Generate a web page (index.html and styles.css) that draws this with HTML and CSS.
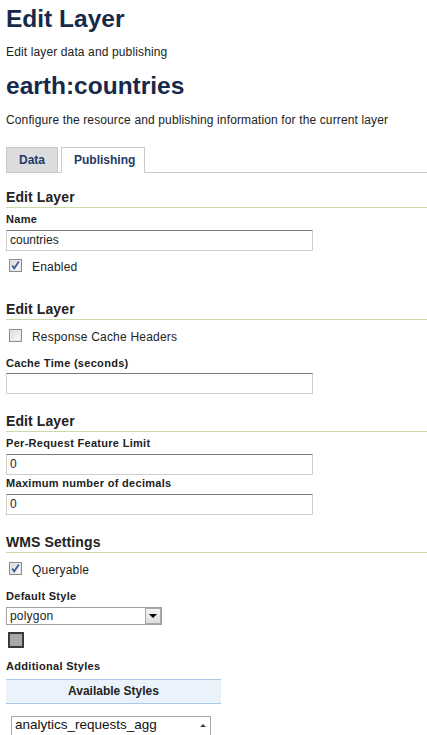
FILE: index.html
```html
<!DOCTYPE html>
<html>
<head>
<meta charset="utf-8">
<link rel="stylesheet" href="styles.css">
</head>
<body>
<h1 class="page-title">Edit Layer</h1>
<p class="page-sub first">Edit layer data and publishing</p>
<h2 class="page-title layer">earth:countries</h2>
<p class="page-sub second">Configure the resource and publishing information for the current layer</p>

<ul class="tabs">
  <li class="tab">Data</li>
  <li class="tab active">Publishing</li>
</ul>

<section class="panel first-panel">
  <h3 class="sec">Edit Layer</h3>
  <div class="lbl">Name</div>
  <div class="input">countries</div>
  <div class="check"><span class="cb on"><svg viewBox="0 0 11 11" width="11" height="11"><path d="M2.2 5.6 L4.2 8.4 L8.8 1.6" fill="none" stroke="#3c5a96" stroke-width="1.8"/></svg></span>Enabled</div>
</section>

<section class="panel">
  <h3 class="sec">Edit Layer</h3>
  <div class="check"><span class="cb"></span>Response Cache Headers</div>
  <div class="lbl after-check">Cache Time (seconds)</div>
  <div class="input tight">&nbsp;</div>
</section>

<section class="panel">
  <h3 class="sec">Edit Layer</h3>
  <div class="lbl">Per-Request Feature Limit</div>
  <div class="input">0</div>
  <div class="lbl after-input">Maximum number of decimals</div>
  <div class="input">0</div>
</section>

<section class="panel">
  <h3 class="sec">WMS Settings</h3>
  <div class="check"><span class="cb on"><svg viewBox="0 0 11 11" width="11" height="11"><path d="M2.2 5.6 L4.2 8.4 L8.8 1.6" fill="none" stroke="#3c5a96" stroke-width="1.8"/></svg></span>Queryable</div>
  <div class="lbl after-check">Default Style</div>
  <div class="select"><span class="select-val">polygon</span><span class="select-btn"><svg viewBox="0 0 8 4" width="8" height="4"><path d="M0 0 H8 L4 4 Z" fill="#000"/></svg></span></div>
  <div class="swatch"></div>
  <div class="lbl after-swatch">Additional Styles</div>
  <div class="avail">Available Styles</div>
  <div class="listbox"><span class="list-item">analytics_requests_agg</span><span class="scroll"><svg viewBox="0 0 6 3" width="6" height="3"><path d="M0 3 H6 L3 0 Z" fill="#444"/></svg></span></div>
</section>
</body>
</html>
```

FILE: styles.css
```css
* { box-sizing: border-box; }
html, body { margin: 0; padding: 0; }
body {
  padding: 5px 0 0 6px;
  font-family: "Liberation Sans", Arial, sans-serif;
  color: #222;
  background: #fff;
  overflow: hidden;
}
.page-title {
  margin: 0;
  font-size: 24.5px;
  line-height: 28px;
  font-weight: bold;
  color: #17294a;
}
.page-title.layer { margin-top: 13px; }
.page-sub {
  margin: 0;
  font-size: 12px;
  line-height: 14px;
  letter-spacing: 0.13px;
  color: #222;
}
.page-sub.first { margin-top: 12px; }
.page-sub.second { margin-top: 13px; }

.tabs {
  list-style: none;
  margin: 20px 0 0 0;
  padding: 0;
  display: flex;
  gap: 3px;
  border-bottom: 1px solid #c8c8c8;
}
.tab {
  margin-bottom: -1px;
  padding: 5px 12px 5px;
  border: 1px solid #c8c8c8;
  background: #dcdcdc;
  font-size: 12px;
  line-height: 14px;
  font-weight: bold;
  color: #1f3a68;
}
.tab.active {
  background: #fff;
  border-bottom-color: #fff;
  padding-right: 9px;
}

.panel {
  display: flow-root;
  margin-top: 19px;
}
.panel.first-panel { margin-top: 16px; }
.sec {
  margin: 0;
  font-size: 14px;
  line-height: 16px;
  font-weight: bold;
  letter-spacing: 0.1px;
  color: #222;
  padding-bottom: 2px;
  border-bottom: 1px solid #c9dba7;
}
.lbl {
  margin-top: 5px;
  font-size: 11px;
  line-height: 13px;
  font-weight: bold;
  letter-spacing: 0.3px;
  color: #222;
}
.lbl.after-input { margin-top: 2px; }
.lbl.after-check { margin-top: 12px; }
.lbl.after-swatch { margin-top: 12px; }
.input {
  margin-top: 4px;
  width: 307px;
  height: 21px;
  border: 1px solid #cfcfcf;
  border-top-color: #7a7a7a;
  padding: 0 3px;
  font-size: 12px;
  line-height: 19px;
  color: #222;
}
.input.tight { margin-top: 3px; }
.check {
  display: flex;
  align-items: flex-start;
  margin-top: 8px;
  margin-bottom: 7px;
  font-size: 12px;
  line-height: 16px;
  letter-spacing: 0.2px;
  color: #222;
}
.sec + .check { margin-top: 9px; }
.cb {
  flex: none;
  width: 13px;
  height: 13px;
  margin: 0 10px 0 3px;
  border: 1px solid #8c8c8c;
  background: linear-gradient(135deg, #d6d6d6 0%, #f0f0f0 60%, #fbfbfb 100%);
  box-shadow: inset 0 0 0 1px #e8e8e8;
  display: flex;
  align-items: center;
  justify-content: center;
}

.select {
  margin-top: 4px;
  width: 156px;
  height: 18px;
  border: 1px solid #a0a0a0;
  display: flex;
  align-items: stretch;
  background: #fff;
}
.select-val {
  flex: 1;
  padding-left: 3px;
  font-size: 12px;
  line-height: 16px;
  letter-spacing: 0.2px;
  color: #222;
}
.select-btn {
  width: 16px;
  border: 1px solid #a9a9a9;
  background: linear-gradient(#f4f4f4, #dcdcdc);
  display: flex;
  align-items: center;
  justify-content: center;
}
.swatch {
  margin: 7px 0 0 2px;
  width: 16px;
  height: 16px;
  border: 2px solid #3a3a3a;
  background: #a8a8a8;
}
.avail {
  margin-top: 6px;
  width: 215px;
  padding: 4px 0 5px;
  border-top: 1px solid #a8c8ea;
  border-bottom: 1px solid #a8c8ea;
  background: #eaf3fc;
  text-align: center;
  font-size: 12px;
  line-height: 14px;
  font-weight: bold;
  color: #222;
}
.listbox {
  margin: 12px 0 0 5px;
  width: 200px;
  height: 30px;
  border: 1px solid #a9a9a9;
  border-bottom: none;
  display: flex;
  justify-content: space-between;
}
.list-item {
  padding-left: 3px;
  font-size: 13.5px;
  line-height: 16px;
  color: #111;
}
.scroll {
  width: 14px;
  padding-top: 7px;
  display: flex;
  justify-content: center;
  align-items: flex-start;
  background: #fff;
}
```
